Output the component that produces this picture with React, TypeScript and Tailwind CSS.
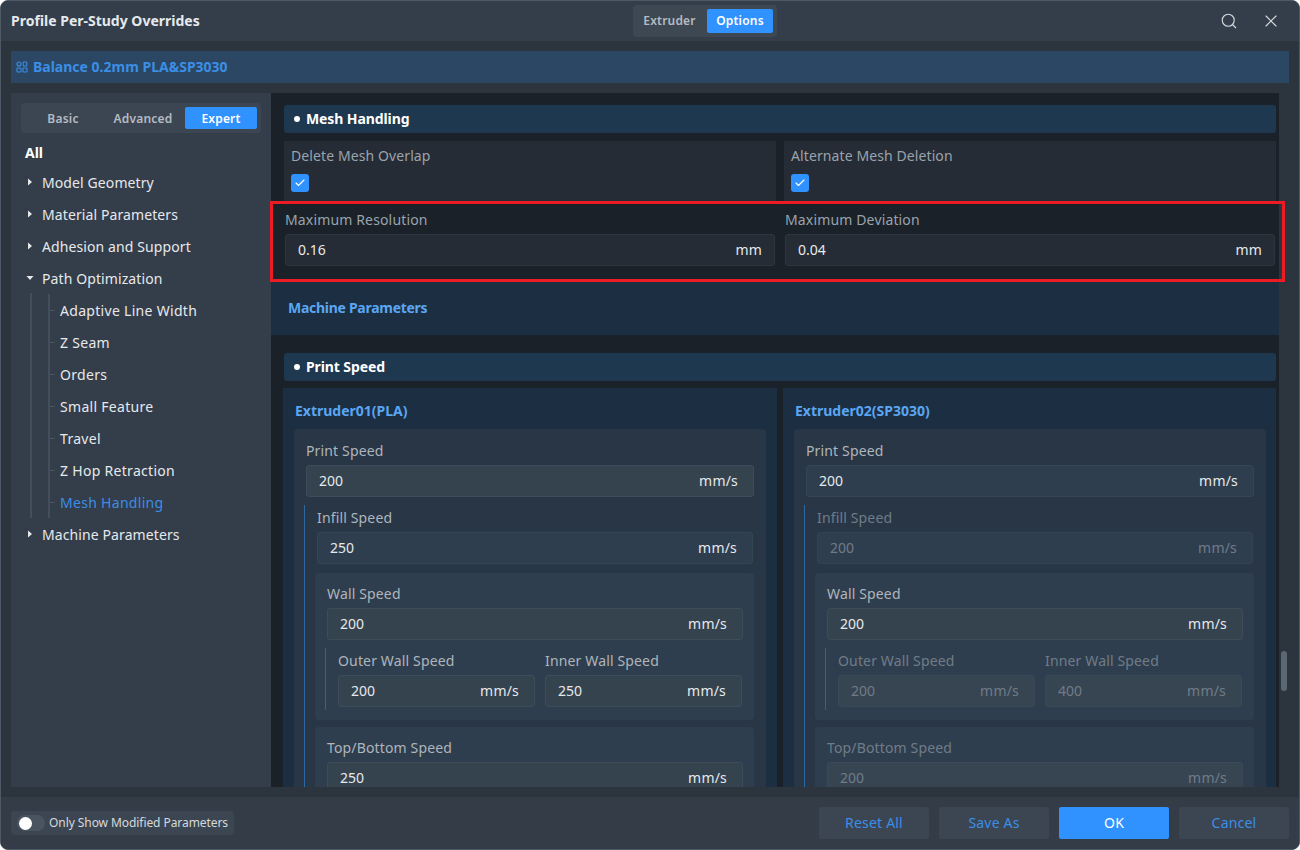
import React from 'react';
import { Check, Search, X } from 'lucide-react';

const font = "font-['Noto_Sans','Noto_Sans_CJK_SC',sans-serif]";

type Variant = 'normal' | 'plain' | 'off' | 'offCard' | 'dark';

const NumberField = ({ value, unit = 'mm/s', variant = 'normal' }: { value: string; unit?: string; variant?: Variant }) => {
  const box =
    variant === 'dark'
      ? 'bg-[#262c35] border-[#2e353f] pr-[12px]'
      : variant === 'plain'
        ? 'bg-[#2f3e4e] border-[#364554] pr-[15px]'
        : variant === 'off'
          ? 'bg-[#2f3e4e] border-[#344352] pr-[15px]'
          : variant === 'offCard'
            ? 'bg-[#374552] border-[#3b4956] pr-[15px]'
            : 'bg-[#35434f] border-[#3e4c59] pr-[15px]';
  const text = variant === 'off' || variant === 'offCard' ? 'text-[#6f7c88]' : 'text-[#e6e9ec]';
  return (
    <div className={`flex h-[32px] items-center justify-between rounded-[3px] border pb-[2px] pl-[12px] text-[14px] ${box} ${text}`}>
      <span>{value}</span>
      <span className="tracking-[0.2px]">{unit}</span>
    </div>
  );
};

const Label = ({ children, off }: { children: React.ReactNode; off?: boolean }) => (
  <div className={`h-[26px] text-[14px] leading-[24px] tracking-[0.15px] ${off ? 'text-[#6f7c88]' : 'text-[#aeb5bc]'}`}>{children}</div>
);

const SectionHead = ({ title }: { title: string }) => (
  <div className="flex h-[28px] items-center gap-[6px] rounded-[3px] bg-[#1e3850] pb-[2px] pl-[10px] text-[14px] font-bold tracking-[-0.1px] text-white">
    <span className="mt-[1px] h-[6px] w-[6px] rounded-full bg-white" />
    {title}
  </div>
);

const CheckCard = ({ title }: { title: string }) => (
  <div className="h-[60px] flex-1 bg-[#262c35] pl-[7px] pt-[3px]">
    <div className="text-[14px] leading-[24px] tracking-[0.1px] text-[#9aa3ad]">{title}</div>
    <div className="mt-[6px] flex h-[18px] w-[18px] items-center justify-center rounded-[3px] bg-[#3092fe]">
      <Check size={12} strokeWidth={2.25} color="#fff" />
    </div>
  </div>
);

const ExtruderColumn = ({ title, speeds, off }: { title: string; speeds: string[]; off?: boolean }) => (
  <div className={off ? 'flex-1 bg-[#1c2e42] pl-[11px] pr-[10px]' : 'w-[494px] shrink-0 bg-[#1c2e42] px-[11px]'}>
    <div className="flex h-[41px] items-center pb-[2px] pl-[1px] pt-[5px] text-[14px] font-bold text-[#5aa6f2]">{title}</div>
    <div className="rounded-[4px] bg-[#283646] px-[12px] pt-[10px]">
      <Label>Print Speed</Label>
      <NumberField value="200" variant={off ? 'plain' : 'normal'} />
      <div className="-ml-[2px] mt-[8px] border-l border-[#2d68a3] pl-[12px]">
        <div className="pt-[1px]">
          <Label off={off}>Infill Speed</Label>
          <div className="mr-[1px]">
            <NumberField value={speeds[0]} variant={off ? 'off' : 'plain'} />
          </div>
        </div>
        <div className="-ml-[2px] mt-[9px] rounded-[4px] bg-[#2f3e4e] pb-[10px] pl-[12px] pr-[11px] pt-[9px]">
          <Label>Wall Speed</Label>
          <NumberField value="200" />
          <div className="-ml-[2px] mr-[1px] mt-[8px] flex gap-[10px] border-l border-[#4f5c69] pb-[3px] pl-[12px]">
            <div className="flex-1 pt-[1px]">
              <Label off={off}>Outer Wall Speed</Label>
              <NumberField value="200" variant={off ? 'offCard' : 'normal'} />
            </div>
            <div className="flex-1 pt-[1px]">
              <Label off={off}>Inner Wall Speed</Label>
              <NumberField value={speeds[1]} variant={off ? 'offCard' : 'normal'} />
            </div>
          </div>
        </div>
        <div className="-ml-[2px] mt-[7px] rounded-[4px] bg-[#2f3e4e] pb-[13px] pl-[12px] pr-[11px] pt-[9px]">
          <Label off={off}>Top/Bottom Speed</Label>
          <NumberField value={speeds[2]} variant={off ? 'offCard' : 'normal'} />
        </div>
      </div>
    </div>
  </div>
);

const Caret = ({ open }: { open?: boolean }) => (
  <svg width="10" height="10" viewBox="0 0 10 10" className="shrink-0">
    {open ? <path d="M1.5 3h7L5 7z" fill="#e6e9ec" /> : <path d="M3 1.5v7L7 5z" fill="#e6e9ec" />}
  </svg>
);

const TreeRow = ({ label, open }: { label: string; open?: boolean }) => (
  <div className="flex h-[32px] items-center gap-[7px] pl-[14px] text-[14px] tracking-[0.1px] text-[#e6e9ec]">
    <Caret open={open} />
    {label}
  </div>
);

const subItems = ['Adaptive Line Width', 'Z Seam', 'Orders', 'Small Feature', 'Travel', 'Z Hop Retraction', 'Mesh Handling'];

const Sidebar = () => (
  <div className="w-[260px] shrink-0 bg-[#343d4a] px-[10px] pt-[10px]">
    <div className="flex h-[30px] items-center rounded-[4px] bg-[#3c4652] pl-[2px] pr-[4px] text-[12px] font-semibold tracking-[0.2px] text-[#b5bbc2]">
      <span className="w-[80px] pt-[1px] text-center">Basic</span>
      <span className="w-[80px] pt-[1px] text-center">Advanced</span>
      <span className="ml-[2px] flex h-[22px] w-[72px] items-center justify-center rounded-[2px] bg-[#3092fe] pt-[1px] text-white">Expert</span>
    </div>
    <div className="flex h-[38px] items-center pl-[4px] pt-[1px] text-[14px] font-bold text-white">All</div>
    <div className="-ml-[10px] -mt-[5px]">
      <TreeRow label="Model Geometry" />
      <TreeRow label="Material Parameters" />
      <TreeRow label="Adhesion and Support" />
      <TreeRow label="Path Optimization" open />
      <div className="-mt-[1px] ml-[19px] border-l-2 border-[#444e5a] pt-[1px]">
        <div className="mb-[16px] ml-[16px] border-l-2 border-[#444e5a]">
          {subItems.map((s, i) => (
            <div key={s} className={`flex h-[32px] items-center gap-[5px] ${i === subItems.length - 1 ? '-mb-[16px]' : ''}`}>
              <span className="h-px w-[5px] bg-[#4a5460]" />
              <span className={`text-[14px] tracking-[0.3px] ${s === 'Mesh Handling' ? 'text-[#3b8ee6]' : 'text-[#e6e9ec]'}`}>{s}</span>
            </div>
          ))}
        </div>
      </div>
      <TreeRow label="Machine Parameters" />
    </div>
  </div>
);

const Content = () => (
  <div className="relative flex-1">
    <div className="h-full overflow-hidden bg-[#1b2129]">
      <div className="pb-0 pl-[13px] pr-[3px] pt-[12px]">
        <SectionHead title="Mesh Handling" />
        <div className="mt-[8px] flex gap-[8px]">
          <CheckCard title="Delete Mesh Overlap" />
          <CheckCard title="Alternate Mesh Deletion" />
        </div>
        <div className="-ml-px mr-[1px] flex h-[80px] gap-[10px] pl-[2px] pt-[7px]">
          <div className="flex-1">
            <Label>
              <span className="text-[#9aa3ad]">Maximum Resolution</span>
            </Label>
            <NumberField value="0.16" unit="mm" variant="dark" />
          </div>
          <div className="flex-1">
            <Label>
              <span className="text-[#9aa3ad]">Maximum Deviation</span>
            </Label>
            <NumberField value="0.04" unit="mm" variant="dark" />
          </div>
        </div>
      </div>
      <div className="flex h-[54px] items-center bg-[#1c2e42] pb-[2px] pl-[17px] text-[14px] font-bold tracking-[-0.28px] text-[#5aa6f2]">Machine Parameters</div>
      <div className="pl-[13px] pr-[3px] pt-[18px]">
        <SectionHead title="Print Speed" />
        <div className="-ml-px mt-[7px] flex gap-[6px]">
          <ExtruderColumn title="Extruder01(PLA)" speeds={['250', '250', '250']} />
          <ExtruderColumn title="Extruder02(SP3030)" speeds={['200', '400', '200']} off />
        </div>
      </div>
    </div>
    {/* annotation box from the screenshot */}
    <div className="pointer-events-none absolute left-[-1px] right-[-6px] top-[108px] h-[81px] border-[3px] border-[#ed1c24]" />
  </div>
);

export default function App() {
  return (
    <div className={`${font} flex h-[850px] w-[1300px] flex-col overflow-hidden rounded-[8px] border border-[#4f5964] bg-[#2c343e]`}>
      <div className="relative flex h-[40px] shrink-0 items-center justify-between bg-[#333e4a] pl-[10px] pr-[18px]">
        <span className="pb-[2px] text-[14px] font-bold text-[#e6e9ec]">Profile Per-Study Overrides</span>
        <div className="absolute left-[632px] top-[4px] flex h-[32px] w-[144px] items-center rounded-[4px] bg-[#3e4853] px-[4px] text-[12px] font-semibold tracking-[0.2px]">
          <span className="w-[65px] text-center text-[#b5bbc2]">Extruder</span>
          <span className="ml-[5px] flex h-[24px] w-[66px] items-center justify-center rounded-[2px] bg-[#3092fe] text-white">Options</span>
        </div>
        <div className="flex items-center gap-[23px] text-[#d5d9dd]">
          <Search size={18} strokeWidth={1.5} />
          <X size={20} strokeWidth={1.4} />
        </div>
      </div>
      <div className="flex min-h-0 flex-1 flex-col px-[10px] pt-[10px]">
        <div className="flex h-[32px] shrink-0 items-center gap-[5px] bg-[#2b4763] pb-[2px] pl-[5px] text-[14px] font-bold text-[#3b8ee6]">
          <svg width="12" height="12" viewBox="0 0 12 12" fill="none" stroke="#3b8ee6" strokeWidth="1.1" className="mt-[2px]">
            <circle cx="3" cy="3" r="2" />
            <rect x="7.2" y="1" width="3.6" height="4" rx=".5" />
            <rect x="1" y="7" width="4" height="4" rx=".5" />
            <rect x="7" y="7" width="4" height="4" rx=".5" />
          </svg>
          Balance 0.2mm PLA&amp;SP3030
        </div>
        <div className="mt-[10px] flex min-h-0 flex-1 pb-[10px]">
          <Sidebar />
          <Content />
          <div className="relative w-[10px] shrink-0">
            <div className="absolute left-[2px] top-[558px] h-[40px] w-[6px] rounded-[3px] bg-[#5a6774]" />
          </div>
        </div>
      </div>
      <div className="flex h-[52px] shrink-0 items-center justify-between bg-[#343c48] pl-[10px] pr-[10px]">
        <div className="flex h-[24px] items-center gap-[4px] rounded-[4px] bg-[#3c4652] pl-[6px] pr-[6px] text-[12px] tracking-[-0.07px] text-[#d5d9dd]">
          <span className="flex h-[16px] w-[28px] items-center rounded-full bg-[#4a5460] pl-[2px]">
            <span className="h-[13px] w-[13px] rounded-full bg-white" />
          </span>
          Only Show Modified Parameters
        </div>
        <div className="flex gap-[10px] text-[14px] tracking-[0.2px]">
          <button className="h-[32px] w-[110px] rounded-[2px] bg-[#3c4653] pb-[2px] text-[#3b8ee6]">Reset All</button>
          <button className="h-[32px] w-[110px] rounded-[2px] bg-[#3c4653] pb-[2px] text-[#3b8ee6]">Save As</button>
          <button className="h-[32px] w-[110px] rounded-[2px] bg-[#3092fe] pb-[2px] text-white">OK</button>
          <button className="h-[32px] w-[110px] rounded-[2px] bg-[#3c4653] pb-[2px] text-[#3b8ee6]">Cancel</button>
        </div>
      </div>
    </div>
  );
}
